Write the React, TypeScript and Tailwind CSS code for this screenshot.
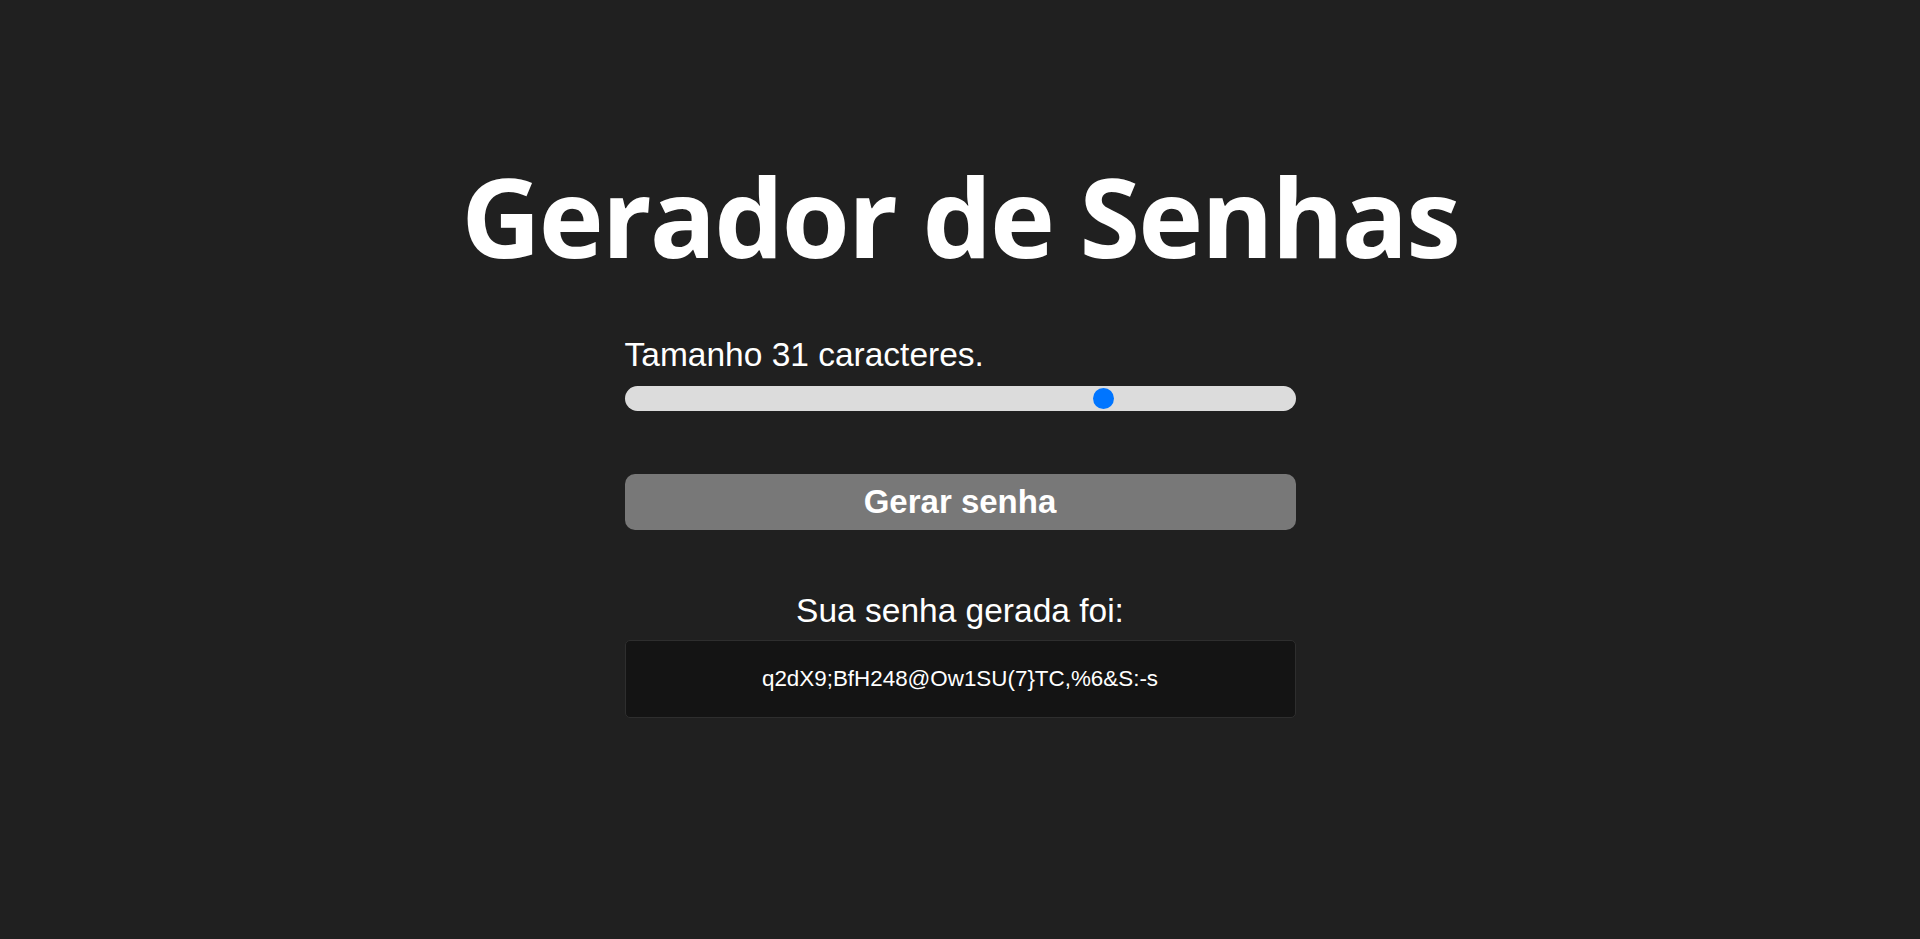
import { useState } from 'react'

const charset = 'abcdefghijklmnopqrstuvwxyzABCDEFGHIJKLMNOPQRSTUVWXYZ0123456789!@#$%&*()-_=+{}[];:,.'

export default function App() {
  const [size, setSize] = useState(31)
  const [password, setPassword] = useState('q2dX9;BfH248@Ow1SU(7}TC,%6&S:-s')

  const generate = () => {
    let out = ''
    for (let i = 0; i < size; i++) out += charset[Math.floor(Math.random() * charset.length)]
    setPassword(out)
  }

  return (
    <div className="min-h-screen bg-[#202020] text-white flex flex-col items-center font-['Liberation_Sans',Arial,sans-serif]">
      {/* Title */}
      <h1 className="mt-[160px] text-[110px] leading-none font-bold font-['Open_Sans',sans-serif] tracking-[-2px]">
        Gerador de Senhas
      </h1>

      <div className="w-[671px] flex flex-col mt-[68px]">
        <label htmlFor="size" className="text-[33.5px] leading-none">
          Tamanho {size} caracteres.
        </label>

        <input
          id="size"
          type="range"
          min={0}
          max={43}
          value={size}
          onChange={e => setSize(Number(e.target.value))}
          className="mt-[14px] w-full h-[25px] appearance-none rounded-full bg-[#dcdcdc] outline-none [&::-webkit-slider-thumb]:appearance-none [&::-webkit-slider-thumb]:w-[21px] [&::-webkit-slider-thumb]:h-[21px] [&::-webkit-slider-thumb]:rounded-full [&::-webkit-slider-thumb]:bg-[#0075ff] [&::-webkit-slider-thumb]:border-0"
        />

        <button
          onClick={generate}
          className="mt-[63px] h-[56px] rounded-[10px] bg-[#787878] text-white text-[33px] font-bold leading-none"
        >
          Gerar senha
        </button>

        <p className="mt-[64px] text-[33.5px] leading-none text-center">Sua senha gerada foi:</p>

        <div className="mt-[13px] h-[78px] rounded-[5px] border border-[#2e2e2e] bg-[#141414] flex items-center justify-center text-[22.4px]">
          {password}
        </div>
      </div>
    </div>
  )
}
